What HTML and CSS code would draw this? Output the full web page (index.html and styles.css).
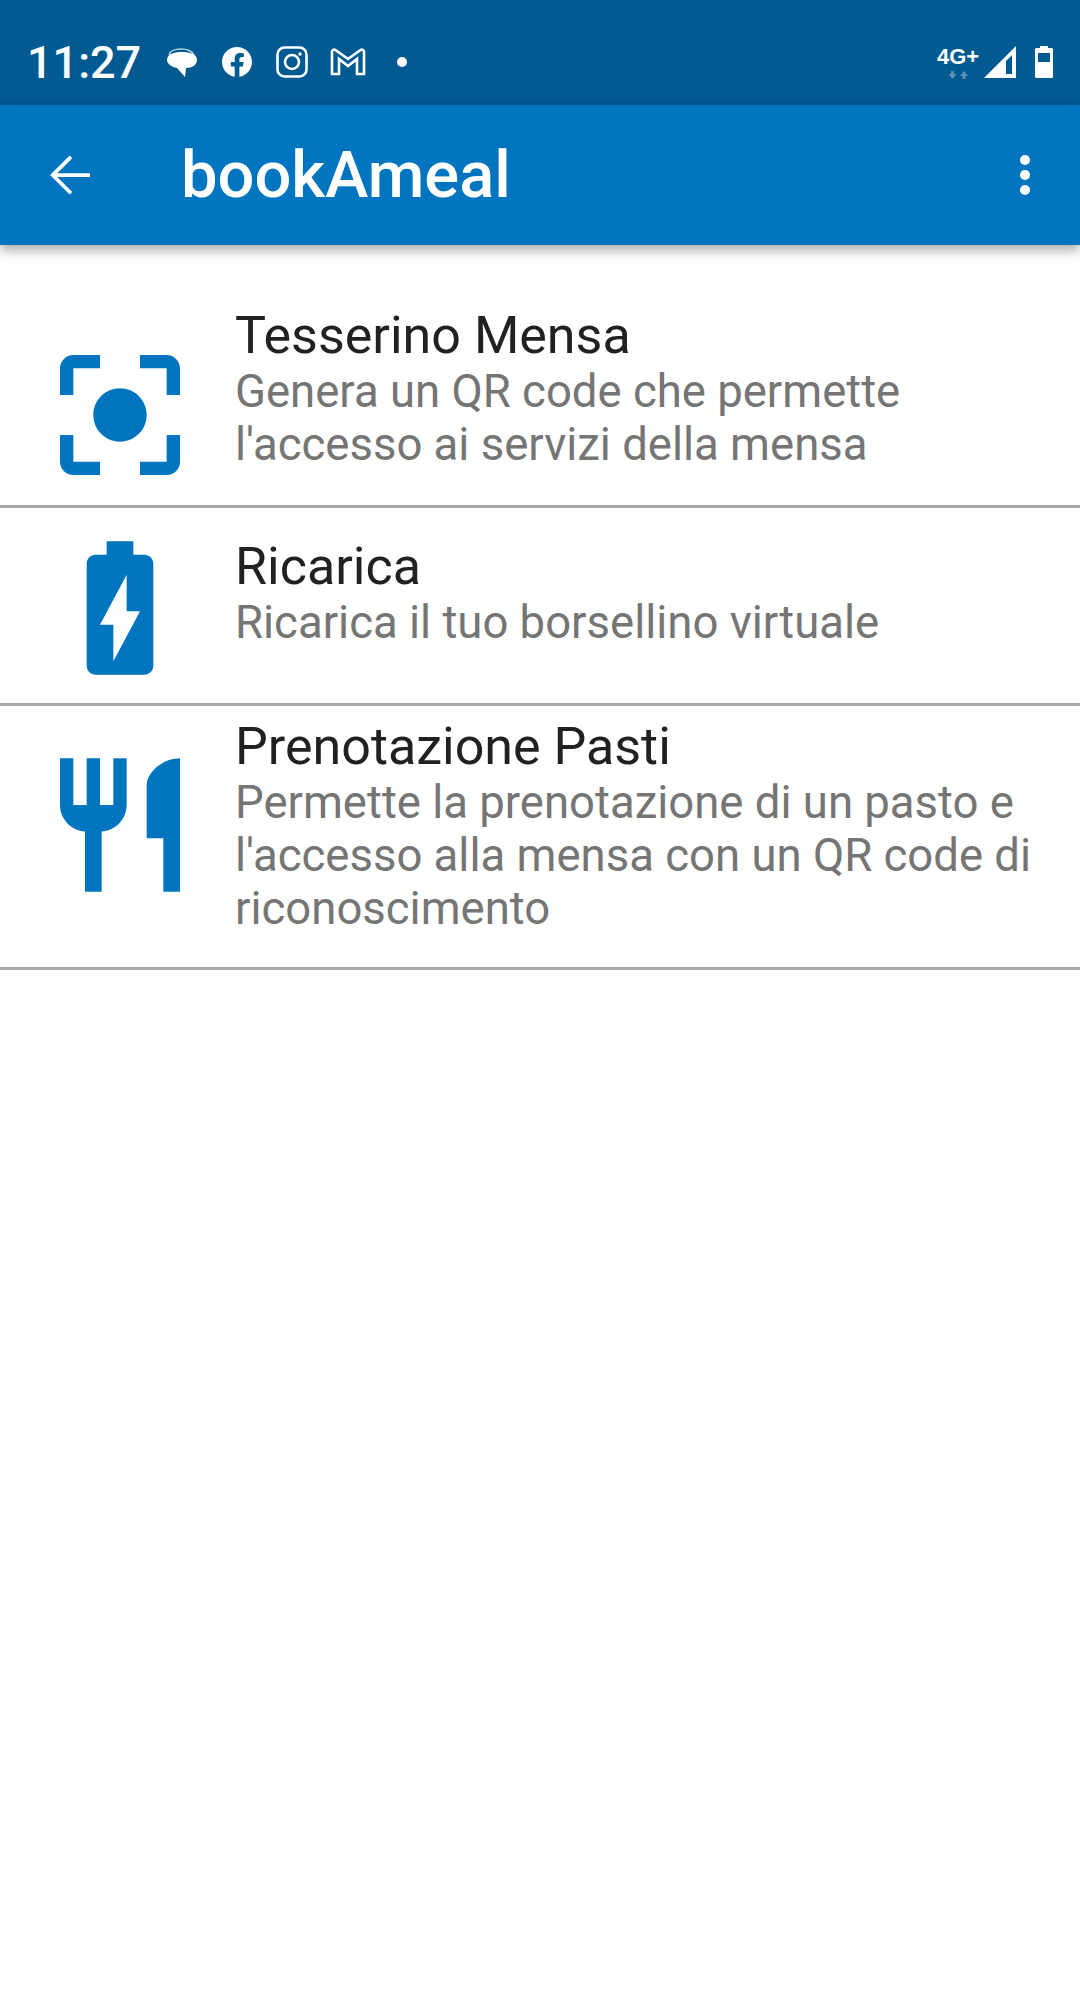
FILE: index.html
```html
<!DOCTYPE html>
<html lang="it">
<head>
    <meta charset="UTF-8">
    <meta name="viewport" content="width=device-width, initial-scale=1.0">
    <title>bookAmeal</title>
    <link rel="stylesheet" href="styles.css">
</head>
<body>
    <div class="status-bar">
        <span class="clock">11:27</span>
        <div class="notif-icons">
            <svg class="notif" viewBox="0 0 32 32">
                <path class="chat-back" d="M3 9c1-4 6-6 12-6s11 2 13 6"/>
                <path d="M16 6c8 0 15 2 15 8 0 5-5 8-11 8l-1 9-8-9C6 21 1 18 1 14 1 8 8 6 16 6z"/>
            </svg>
            <svg class="notif" viewBox="0 0 32 32">
                <path d="M31 16C31 7.700 24.300 1 16 1S1 7.700 1 16c0 7.500 5.500 13.700 12.700 14.800V20.400H9.800V16h3.900v-3.300c0-3.800 2.200-5.800 5.700-5.800 1.600 0 3.400.3 3.400.3v3.700h-1.900c-1.900 0-2.500 1.200-2.500 2.400V16h4.200l-.7 4.400h-3.500v10.400C25.500 29.700 31 23.500 31 16z"/>
            </svg>
            <svg class="notif outline" viewBox="0 0 32 32">
                <rect x="1.500" y="1.500" width="29" height="29" rx="7"/>
                <circle cx="16" cy="16" r="7"/>
                <circle class="dot" cx="24" cy="8" r="1.800"/>
            </svg>
            <svg class="notif outline gmail" viewBox="0 0 36 28">
                <path d="M2 3.500C2 2 4 1 5.500 2L18 11 30.500 2C32 1 34 2 34 3.500V26H27V11L18 18 9 11V26H2z"/>
            </svg>
            <span class="more-dot"></span>
        </div>
        <div class="system-icons">
            <div class="network">
                <span class="network-label">4G+</span>
                <svg class="network-arrows" viewBox="0 0 20 8">
                    <path d="M3 0h3v3h2.500L4.500 8 .5 3H3zM16 0l4 5h-2.500v3h-3V5H12z"/>
                </svg>
            </div>
            <svg class="signal" viewBox="0 0 32 32">
                <path fill-rule="evenodd" d="M32 0V32H0zM28 9 22 15V28H28z"/>
            </svg>
            <svg class="battery" viewBox="0 0 20 32">
                <path fill-rule="evenodd" d="M6 0h8v2h3.500c1 0 1.500.6 1.500 1.500V30.500c0 1-.6 1.500-1.500 1.500H2.500C1.500 32 1 31.400 1 30.500V3.500C1 2.500 1.600 2 2.500 2H6zM4 7V16H16V7z"/>
            </svg>
        </div>
    </div>

    <header class="app-bar">
        <svg class="back" viewBox="0 0 24 24">
            <path d="M20 11.250H6.900l6-6L11.850 4.200 4 12l7.850 7.800 1.050-1.050-6-6H20z"/>
        </svg>
        <h1 class="app-title">bookAmeal</h1>
        <div class="overflow">
            <span></span>
            <span></span>
            <span></span>
        </div>
    </header>

    <ul class="menu">
        <li class="menu-item item-card">
            <svg class="menu-icon" viewBox="0 0 24 24">
                <path d="M12 8c-2.210 0-4 1.790-4 4s1.790 4 4 4 4-1.790 4-4-1.790-4-4-4zm-7 7H3v4c0 1.100.9 2 2 2h4v-2H5v-4zM5 5h4V3H5c-1.100 0-2 .9-2 2v4h2V5zm14-2h-4v2h4v4h2V5c0-1.100-.9-2-2-2zm0 16h-4v2h4c1.100 0 2-.9 2-2v-4h-2v4z"/>
            </svg>
            <div class="menu-text">
                <div class="menu-title">Tesserino Mensa</div>
                <div class="menu-desc">Genera un QR code che permette l'accesso ai servizi della mensa</div>
            </div>
        </li>
        <li class="menu-item item-topup">
            <svg class="menu-icon" viewBox="0 0 24 24">
                <path d="M15.670 4H14V2h-4v2H8.330C7.600 4 7 4.600 7 5.330v15.330C7 21.400 7.600 22 8.330 22h7.330c.74 0 1.340-.6 1.340-1.330V5.330C17 4.600 16.400 4 15.670 4zM11 20v-5.500H9L13 7v5.500h2L11 20z"/>
            </svg>
            <div class="menu-text">
                <div class="menu-title">Ricarica</div>
                <div class="menu-desc">Ricarica il tuo borsellino virtuale</div>
            </div>
        </li>
        <li class="menu-item item-meals">
            <svg class="menu-icon" viewBox="0 0 24 24">
                <path d="M11 9H9V2H7v7H5V2H3v7c0 2.120 1.660 3.840 3.750 3.970V22h2.500v-9.030C11.340 12.840 13 11.120 13 9V2h-2v7zm5-3v8h2.500v8H21V2c-2.760 0-5 2.240-5 4z"/>
            </svg>
            <div class="menu-text">
                <div class="menu-title">Prenotazione Pasti</div>
                <div class="menu-desc">Permette la prenotazione di un pasto e l'accesso alla mensa con un QR code di riconoscimento</div>
            </div>
        </li>
    </ul>
</body>
</html>
```

FILE: styles.css
```css
html, body {
    margin: 0;
    padding: 0;
}

body {
    width: 1080px;
    height: 2016px;
    background-color: #fff;
    font-family: Roboto, "Noto Sans", sans-serif;
    overflow: hidden;
}

/* barra di stato */
.status-bar {
    display: flex;
    align-items: center;
    height: 105px;
    padding: 19px 26px 0 27px;
    box-sizing: border-box;
    background-color: #005a92;
    color: #fff;
}

.clock {
    font-size: 45px;
    font-weight: 500;
    line-height: 1;
    margin-right: 25px;
}

.notif-icons {
    display: flex;
    align-items: center;
    gap: 23px;
    flex: 1;
}

.notif {
    width: 32px;
    height: 32px;
    fill: #fff;
}

.notif.outline {
    fill: none;
    stroke: #fff;
    stroke-width: 2.6;
}

.notif.outline .dot {
    fill: #fff;
    stroke: none;
}

.notif.gmail {
    width: 36px;
    height: 28px;
    margin-left: -1px;
}

.chat-back {
    fill: none;
    stroke: #fff;
    stroke-width: 1.5;
    opacity: .7;
}

.more-dot {
    width: 10px;
    height: 10px;
    margin-left: 8px;
    border-radius: 50%;
    background-color: #fff;
}

.system-icons {
    display: flex;
    align-items: center;
}

.network {
    display: flex;
    flex-direction: column;
    align-items: center;
    width: 42px;
    margin-right: 5px;
}

.network-label {
    font-family: "Liberation Sans", sans-serif;
    font-size: 22px;
    font-weight: 700;
    line-height: 22px;
}

.network-arrows {
    width: 20px;
    height: 8px;
    margin-top: 3px;
    fill: #5f8fb3;
}

.signal {
    width: 32px;
    height: 32px;
    fill: #fff;
}

.battery {
    width: 20px;
    height: 32px;
    margin-left: 18px;
    fill: #fff;
}

/* barra dell'app */
.app-bar {
    display: flex;
    align-items: center;
    height: 140px;
    background-color: #0075bf;
    box-shadow: 0 5px 12px rgba(0, 0, 0, .35);
    color: #fff;
    position: relative;
}

.back {
    width: 60px;
    height: 60px;
    margin-left: 40px;
    fill: #fff;
}

.app-title {
    flex: 1;
    margin: 0 0 0 81px;
    font-size: 65px;
    font-weight: 500;
}

.overflow {
    display: flex;
    flex-direction: column;
    gap: 5px;
    margin-right: 50px;
}

.overflow span {
    width: 10px;
    height: 10px;
    border-radius: 50%;
    background-color: #fff;
}

/* lista delle voci */
.menu {
    list-style: none;
    margin: 0;
    padding: 0;
}

.menu-item {
    display: flex;
    align-items: flex-start;
    box-sizing: border-box;
    border-bottom: 3px solid #a8a8a8;
}

.item-card {
    height: 263px;
    padding-top: 62px;
}

.item-topup {
    height: 198px;
    padding-top: 30px;
}

.item-meals {
    height: 264px;
    padding-top: 12px;
}

.menu-icon {
    flex: none;
    width: 160px;
    height: 160px;
    margin-left: 40px;
    fill: #0075bf;
}

/* le icone non stanno alla stessa altezza del testo */
.item-card .menu-icon {
    margin-top: 28px;
}

.item-topup .menu-icon {
    margin-top: -10px;
}

.item-meals .menu-icon {
    margin-top: 27px;
}

.menu-text {
    margin-left: 35px;
    margin-right: 40px;
}

.menu-title {
    font-size: 52px;
    line-height: 58px;
    color: #212121;
}

.menu-desc {
    font-size: 45.5px;
    line-height: 53px;
    color: #757575;
}
```
